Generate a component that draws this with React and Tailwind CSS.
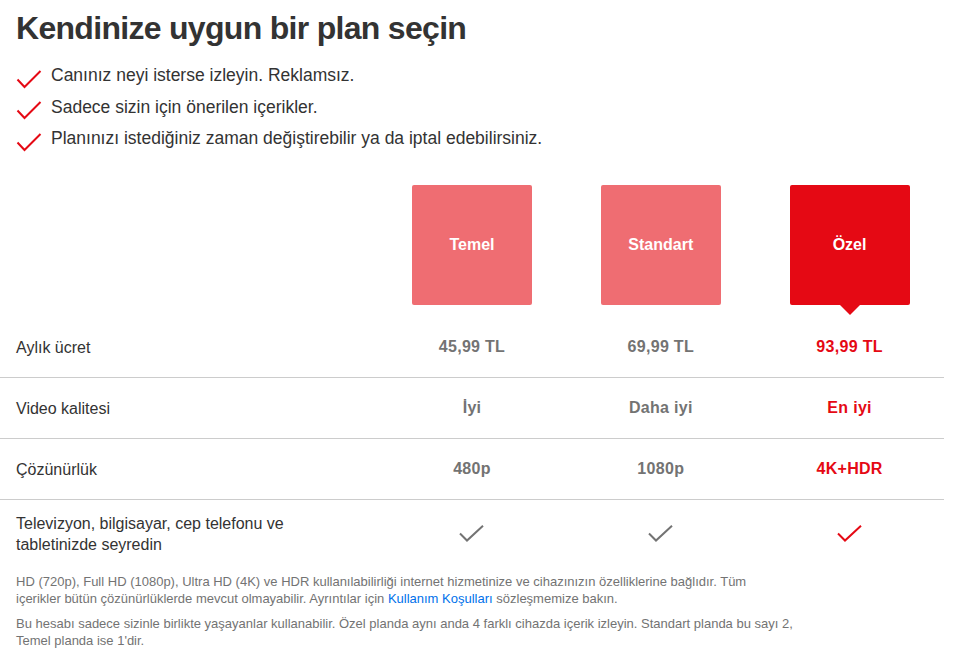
import React from "react";

const Check = ({ className }) => (
  <svg width="26" height="20" viewBox="0 0 26 20" className={className} fill="none">
    <path d="M1.5 10.5 L8.5 18 L24.5 2" stroke="currentColor" strokeWidth="2" />
  </svg>
);

const GridCheck = ({ className }) => (
  <svg width="26" height="18" viewBox="0 0 26 18" className={className} fill="none">
    <path d="M1 8.5 L8 15.5 L24 0.8" stroke="currentColor" strokeWidth="2" />
  </svg>
);

const plans = [
  { name: "Temel", price: "45,99 TL", quality: "İyi", res: "480p" },
  { name: "Standart", price: "69,99 TL", quality: "Daha iyi", res: "1080p" },
  { name: "Özel", price: "93,99 TL", quality: "En iyi", res: "4K+HDR", selected: true },
];

function Row({ label, values, border = true, h = "h-[61px]" }) {
  return (
    <div className={`grid grid-cols-[40%_20%_20%_20%] items-center ${h} ${border ? "border-b border-[#ccc]" : ""}`}>
      <div className="pl-4 text-[16px] text-[#333] leading-[21px]">{label}</div>
      {values.map((v, i) => (
        <div
          key={i}
          className={`text-center text-[16px] font-bold tracking-[0.3px] ${plans[i].selected ? "text-[#e50914]" : "text-[#737373]"}`}
        >
          {v}
        </div>
      ))}
    </div>
  );
}

export default function App() {
  return (
    <div className="w-[963px] h-[656px] bg-white overflow-hidden" style={{ fontFamily: '"Liberation Sans", Arial, sans-serif' }}>
      <div className="w-[944px]">
        <h1 className="pl-4 pt-[8px] text-[32px] leading-[40px] font-bold tracking-[-0.7px] text-[#333]">Kendinize uygun bir plan seçin</h1>
        <ul className="mt-[16px] pl-4 flex flex-col gap-[8.5px]">
          {[
            "Canınız neyi isterse izleyin. Reklamsız.",
            "Sadece sizin için önerilen içerikler.",
            "Planınızı istediğiniz zaman değiştirebilir ya da iptal edebilirsiniz.",
          ].map((t) => (
            <li key={t} className="flex items-center h-[23px]">
              <Check className="text-[#e50914] mt-[6px] shrink-0" />
              <span className="ml-[9px] text-[17.5px] text-[#333] leading-[23px]">{t}</span>
            </li>
          ))}
        </ul>

        <div className="mt-[35px] grid grid-cols-[40%_20%_20%_20%] h-[132px]">
          <div />
          {plans.map((p) => (
            <div key={p.name} className="flex justify-center">
              <div
                className={`relative w-[120px] h-[120px] rounded-[2px] flex items-center justify-center text-white font-bold text-[16px] ${
                  p.selected ? "bg-[#e50914]" : "bg-[#ef6d72]"
                }`}
              >
                {p.name}
                {p.selected && (
                  <div className="absolute left-1/2 top-full -translate-x-1/2 w-0 h-0 border-l-[10px] border-r-[10px] border-t-[10px] border-l-transparent border-r-transparent border-t-[#e50914]" />
                )}
              </div>
            </div>
          ))}
        </div>

        <Row label="Aylık ücret" values={plans.map((p) => p.price)} />
        <Row label="Video kalitesi" values={plans.map((p) => p.quality)} />
        <Row label="Çözünürlük" values={plans.map((p) => p.res)} />
        <div className="grid grid-cols-[40%_20%_20%_20%] items-center h-[67px]">
          <div className="pl-4 text-[16px] text-[#333] leading-[21px]">
            Televizyon, bilgisayar, cep telefonu ve
            <br />
            tabletinizde seyredin
          </div>
          {plans.map((p) => (
            <div key={p.name} className="flex justify-center">
              <GridCheck className={p.selected ? "text-[#e50914]" : "text-[#737373]"} />
            </div>
          ))}
        </div>

        <div className="pl-4 pr-4 mt-[6px] text-[13px] leading-[17px] text-[#737373]">
          <p>
            HD (720p), Full HD (1080p), Ultra HD (4K) ve HDR kullanılabilirliği internet hizmetinize ve cihazınızın özelliklerine bağlıdır. Tüm
            <br />
            içerikler bütün çözünürlüklerde mevcut olmayabilir. Ayrıntılar için <span className="text-[#0071eb]">Kullanım Koşulları</span> sözleşmemize bakın.
          </p>
          <p className="mt-[8px]">
            Bu hesabı sadece sizinle birlikte yaşayanlar kullanabilir. Özel planda aynı anda 4 farklı cihazda içerik izleyin. Standart planda bu sayı 2,
            <br />
            Temel planda ise 1'dir.
          </p>
        </div>
      </div>
    </div>
  );
}
